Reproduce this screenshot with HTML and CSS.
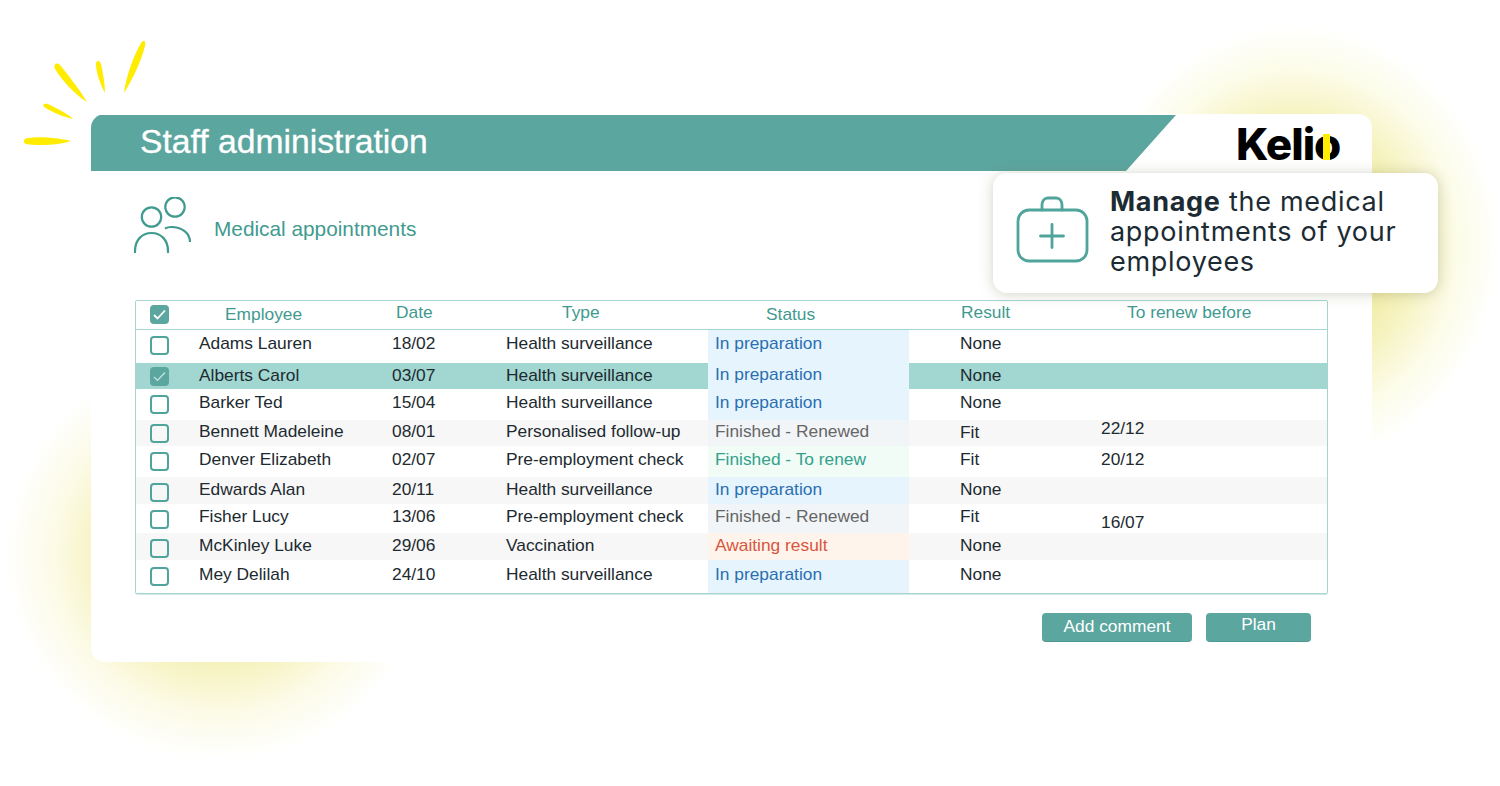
FILE: index.html
```html
<!DOCTYPE html>
<html lang="en">
<head>
  <meta charset="UTF-8" />
  <meta name="viewport" content="width=device-width, initial-scale=1.0"/>
  <title>Kelio - Staff administration</title>
  <link rel="stylesheet" href="styles.css">
</head>
<body>
  <!-- Soft yellow glows behind the card -->
  <div class="glow glow-right"></div>
  <div class="glow glow-left"></div>

  <svg class="rays" width="150" height="150" viewBox="0 0 150 150">
    <path d="M124 93C126 76 134 55 141 43C144 39 146 41 145 46C141 62 132 80 124 93Z"/>
    <path d="M105 93C100 84 96 72 96 64C96 60 100 60 101 64C103 73 105 84 105 93Z"/>
    <path d="M87 102C75 95 61 79 55 69C53 64 57 62 60 65C69 76 80 90 87 102Z"/>
    <path d="M73 119C63 117 50 111 44 107C42 104 45 103 48 104C56 108 67 113 73 119Z"/>
    <path d="M71 141C60 145 38 146 26 144C22 142 24 138 28 138C40 136 60 138 71 141Z"/>
  </svg>

  <div class="card">
    <div class="header">
      <div class="header-band"><h1>Staff administration</h1></div>
      <div class="logo">Kelio<span class="logo-bar"></span></div>
    </div>

    <div class="section">
      <svg class="people-icon" width="60" height="60" viewBox="0 0 60 60" fill="none">
        <circle cx="17.500" cy="20" r="9.700"/>
        <circle cx="41" cy="10" r="9.700"/>
        <path d="M1 56V54C1 43 8 36 17.500 36C27 36 34 43 34 54V56"/>
        <path d="M31 31.500C33 30.500 35 30 37 30C48 30 56 36 56 45"/>
      </svg>
      <h2>Medical appointments</h2>
    </div>

    <div class="table">
      <div class="row head">
        <div class="cell"><span class="check on"><svg width="13" height="11" viewBox="0 0 13 11" fill="none"><path d="M1 6L4.500 9.500L12 1.500"/></svg></span></div>
        <div class="cell h-emp">Employee</div>
        <div class="cell h-date">Date</div>
        <div class="cell h-type">Type</div>
        <div class="cell h-status">Status</div>
        <div class="cell h-result">Result</div>
        <div class="cell h-renew">To renew before</div>
      </div>

      <div class="row r1">
        <div class="cell"><span class="check"></span></div>
        <div class="cell">Adams Lauren</div>
        <div class="cell">18/02</div>
        <div class="cell">Health surveillance</div>
        <div class="cell status prep">In preparation</div>
        <div class="cell result">None</div>
        <div class="cell"></div>
      </div>
      <div class="row r2 selected">
        <div class="cell"><span class="check on dim"><svg width="13" height="11" viewBox="0 0 13 11" fill="none"><path d="M1 6L4.500 9.500L12 1.500"/></svg></span></div>
        <div class="cell">Alberts Carol</div>
        <div class="cell">03/07</div>
        <div class="cell">Health surveillance</div>
        <div class="cell status prep raise">In preparation</div>
        <div class="cell result">None</div>
        <div class="cell"></div>
      </div>
      <div class="row r3">
        <div class="cell"><span class="check"></span></div>
        <div class="cell">Barker Ted</div>
        <div class="cell">15/04</div>
        <div class="cell">Health surveillance</div>
        <div class="cell status prep">In preparation</div>
        <div class="cell result">None</div>
        <div class="cell"></div>
      </div>
      <div class="row r4 alt">
        <div class="cell"><span class="check"></span></div>
        <div class="cell">Bennett Madeleine</div>
        <div class="cell">08/01</div>
        <div class="cell">Personalised follow-up</div>
        <div class="cell status done">Finished - Renewed</div>
        <div class="cell result">Fit</div>
        <div class="cell renew-up">22/12</div>
      </div>
      <div class="row r5">
        <div class="cell"><span class="check"></span></div>
        <div class="cell">Denver Elizabeth</div>
        <div class="cell">02/07</div>
        <div class="cell">Pre-employment check</div>
        <div class="cell status renew">Finished - To renew</div>
        <div class="cell result">Fit</div>
        <div class="cell">20/12</div>
      </div>
      <div class="row r6 alt">
        <div class="cell"><span class="check"></span></div>
        <div class="cell">Edwards Alan</div>
        <div class="cell">20/11</div>
        <div class="cell">Health surveillance</div>
        <div class="cell status prep">In preparation</div>
        <div class="cell result">None</div>
        <div class="cell"></div>
      </div>
      <div class="row r7">
        <div class="cell"><span class="check"></span></div>
        <div class="cell">Fisher Lucy</div>
        <div class="cell">13/06</div>
        <div class="cell">Pre-employment check</div>
        <div class="cell status done">Finished - Renewed</div>
        <div class="cell result">Fit</div>
        <div class="cell renew-down">16/07</div>
      </div>
      <div class="row r8 alt">
        <div class="cell"><span class="check"></span></div>
        <div class="cell">McKinley Luke</div>
        <div class="cell">29/06</div>
        <div class="cell">Vaccination</div>
        <div class="cell status waiting">Awaiting result</div>
        <div class="cell result">None</div>
        <div class="cell"></div>
      </div>
      <div class="row r9">
        <div class="cell"><span class="check"></span></div>
        <div class="cell">Mey Delilah</div>
        <div class="cell">24/10</div>
        <div class="cell">Health surveillance</div>
        <div class="cell status prep">In preparation</div>
        <div class="cell result">None</div>
        <div class="cell"></div>
      </div>
    </div>

    <div class="actions">
      <button class="btn btn-comment">Add comment</button>
      <button class="btn btn-plan">Plan</button>
    </div>
  </div>

  <!-- Callout over the card -->
  <div class="callout">
    <svg class="kit-icon" width="74" height="70" viewBox="0 0 74 70" fill="none">
      <path d="M26 14V9C26 5 28 2 32 2H40C44 2 46 5 46 9V14"/>
      <rect x="2" y="14" width="69" height="51" rx="11"/>
      <path d="M36 28.500V51.500M24.500 40H47.500"/>
    </svg>
    <p><b>Manage</b> the medical appointments of your employees</p>
  </div>
</body>
</html>
```

FILE: styles.css
```css
html, body {
  height: 100%;
}

body {
  margin: 0;
  background: #fff;
  font-family: "Liberation Sans", Arial, sans-serif;
  font-size: 17.35px;
  line-height: 20px;
  color: #1d2a30;
  position: relative;
  overflow: hidden;
}

/* Background decoration */
.glow {
  position: absolute;
  border-radius: 50%;
}
.glow-right {
  left: 1090px;
  top: 25px;
  width: 410px;
  height: 440px;
  background: radial-gradient(closest-side, #ece48a 0%, #f2eda8 45%, #f7f4c6 62%, #fcfce9 80%, #fff 100%);
}
.glow-left {
  left: 5px;
  top: 350px;
  width: 425px;
  height: 410px;
  background: radial-gradient(closest-side, #f0eb9c 0%, #f5f1ba 50%, #f8f5cc 62%, #fcfbe8 78%, #fff 100%);
}

.rays {
  position: absolute;
  left: 0;
  top: 0;
}
.rays path {
  fill: #ffec00;
}

/* Main card */
.card {
  position: absolute;
  left: 91px;
  top: 114px;
  width: 1281px;
  height: 548px;
  background: #fff;
  border-radius: 14px;
  overflow: hidden;
}

.header {
  display: flex;
  height: 58px;
  position: relative;
}
.header-band {
  flex: 0 0 1085px;
  height: 56px;
  margin-top: 1px;
  background: #5ca6a0;
  clip-path: polygon(0 0, 100% 0, 1035px 100%, 0 100%);
  color: #fff;
}
.header-band h1 {
  margin: 0;
  padding: 7px 0 0 49px;
  font-size: 33.7px;
  line-height: 38px;
  font-weight: normal;
  -webkit-text-stroke: 0.3px #fff;
}

.logo {
  margin: 1px 0 0 60px;
  font-family: Inter, "Liberation Sans", sans-serif;
  font-size: 44px;
  font-weight: 800;
  line-height: 58px;
  letter-spacing: -1px;
  color: #000;
  position: relative;
  height: 57px;
}
.logo-bar {
  position: absolute;
  left: 87px;
  top: 19px;
  width: 7px;
  height: 26px;
  background: #ffec00;
}

.section {
  display: flex;
  align-items: flex-start;
  box-sizing: border-box;
  height: 128px;
  padding: 25px 0 0 43px;
}
.section h2 {
  margin: 20px 0 0 20px;
  font-size: 20.8px;
  line-height: 24px;
  font-weight: normal;
  color: #3f9a90;
}
.people-icon circle,
.people-icon path {
  stroke: #3f9a90;
  stroke-width: 2.2;
}

/* Table */
.table {
  width: 1191px;
  margin-left: 44px;
  border: 1px solid #a6d5cf;
  border-radius: 2px;
  box-shadow: 0 1px 0 #d5eae7;
}
.row {
  display: grid;
  grid-template-columns: 63px 193px 114px 202px 201px 192px 1fr;
  --pad: 3px;
}
.cell {
  padding-top: var(--pad);
  white-space: nowrap;
}

.head {
  height: 28px;
  color: #3f9a90;
  border-bottom: 1px solid #a6d5cf;
  --pad: 1px;
}
.h-emp { padding-left: 26px; padding-top: 3px; }
.h-date { padding-left: 4px; }
.h-type { padding-left: 56px; }
.h-status { padding-left: 58px; padding-top: 3px; }
.h-result { padding-left: 52px; }
.h-renew { padding-left: 26px; }

.r1 { height: 33px; --pad: 3px; }
.r2 { height: 26px; --pad: 2px; }
.r3 { height: 31px; --pad: 3px; }
.r4 { height: 26px; --pad: 1px; }
.r5 { height: 31px; --pad: 3px; }
.r6 { height: 27px; --pad: 2px; }
.r7 { height: 29px; --pad: 2px; }
.r8 { height: 27px; --pad: 2px; }
.r9 { height: 33px; --pad: 4px; }

.alt { background: #f7f7f7; }
.selected { background: #a1d6d1; }

.check {
  display: flex;
  align-items: center;
  justify-content: center;
  box-sizing: border-box;
  width: 19px;
  height: 19px;
  margin: 3px 0 0 14px;
  border: 2px solid #4fa49b;
  border-radius: 4px;
  background: transparent;
}
.check.on {
  background: #5ca6a0;
  border-color: #5ca6a0;
}
.check.on svg path {
  stroke: #fff;
  stroke-width: 1.8;
}
.check.dim svg path {
  stroke: #c6e6e3;
  stroke-width: 1.2;
}
.r2 .check {
  margin-top: 2px;
}
.r6 .check,
.r7 .check,
.r8 .check {
  margin-top: 4px;
}

.status { padding-left: 7px; }
.raise { padding-top: 1px; }
.prep { background: #e6f4fe; color: #2a6fb0; }
.done { background: #f1f5f8; color: #666; }
.renew { background: #f0fcf5; color: #34a08d; }
.waiting { background: #fff4ec; color: #d9553d; }

.result { padding-left: 51px; }
.r4 .result { padding-top: 2px; }
.renew-up { padding-top: 0; margin-top: -2px; }
.renew-down { padding-top: 8px; }

/* Buttons */
.actions {
  display: flex;
  gap: 14px;
  margin: 19px 0 0 951px;
}
.btn {
  height: 29px;
  padding: 0 0 3px;
  border: 0;
  border-bottom: 1px solid #4f9a94;
  border-radius: 4px;
  background: #5ca6a0;
  color: #fff;
  font: inherit;
}
.btn-comment { width: 150px; }
.btn-plan { width: 105px; padding-bottom: 6px; }

/* Callout */
.callout {
  position: absolute;
  left: 993px;
  top: 173px;
  width: 445px;
  height: 120px;
  box-sizing: border-box;
  display: flex;
  align-items: center;
  padding-left: 23px;
  background: #fff;
  border-radius: 14px;
  box-shadow: 0 1px 14px rgba(110, 110, 70, 0.3);
}
.kit-icon {
  margin-bottom: 4px;
}
.kit-icon path,
.kit-icon rect {
  stroke: #4fa49b;
  stroke-width: 2.8;
  stroke-linecap: round;
}
.callout p {
  margin: 0 0 2px 20px;
  width: 320px;
  font-family: Inter, "Noto Sans", sans-serif;
  font-size: 27px;
  line-height: 30px;
  letter-spacing: 0.7px;
  color: #1c2b33;
}
.callout b {
  font-weight: 700;
}
```
